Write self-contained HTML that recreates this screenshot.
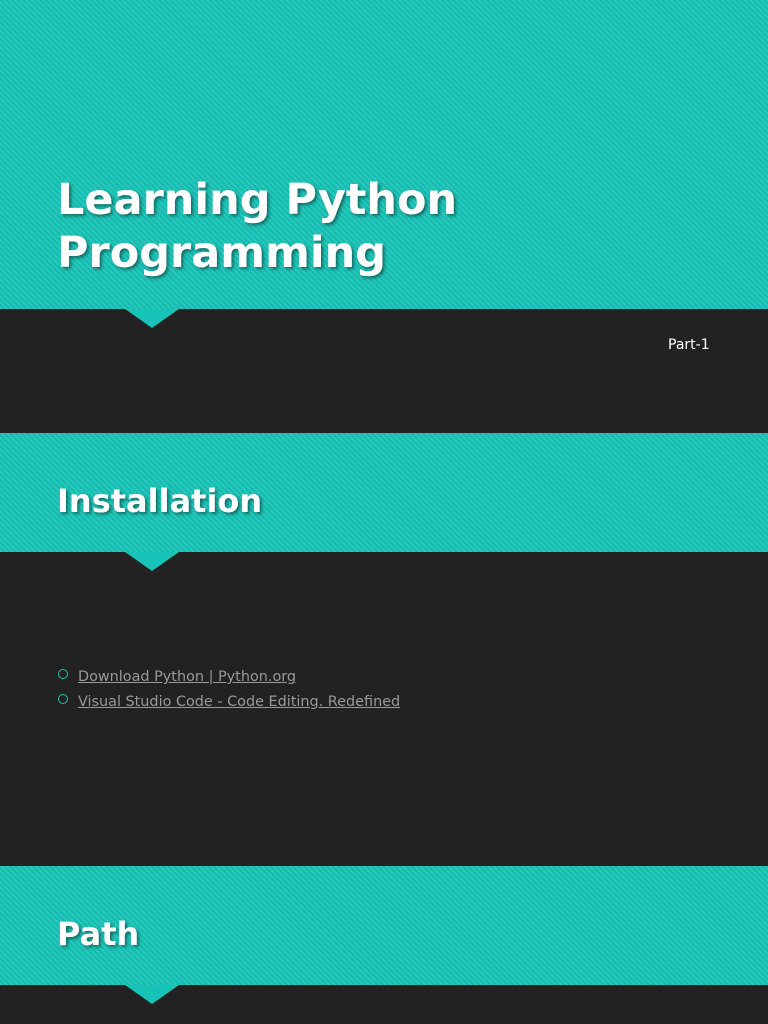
<!DOCTYPE html>
<html><head><style>
body{margin:0;width:768px;height:1024px;overflow:hidden;background:#222;font-family:"DejaVu Sans","Liberation Sans",sans-serif;}
.t{position:absolute;left:0;width:768px;background-color:#17c3b6;background-image:repeating-linear-gradient(45deg,rgba(255,255,255,0.07) 0 2px,rgba(0,0,0,0.04) 2px 4px);}
.tri{position:absolute;left:125px;width:0;height:0;border-left:27px solid transparent;border-right:27px solid transparent;border-top:19px solid #17c3b6;}
h1,h2{position:absolute;left:57px;margin:0;color:#fff;font-weight:bold;text-shadow:2px 2px 3px rgba(0,0,0,0.45);}
h1{font-size:43px;line-height:53px;top:174px;}
h2{font-size:32px;}
a{color:#999;font-size:14.4px;text-decoration:underline;}
.li{position:absolute;left:58px;}
.li span{display:inline-block;width:8px;height:8px;border:1.5px solid #17c3b6;border-radius:50%;margin-right:10px;vertical-align:2px;}
</style></head><body>
<div class="t" style="top:0;height:309px"></div>
<div class="tri" style="top:309px"></div>
<h1>Learning Python<br>Programming</h1>
<div style="position:absolute;left:668px;top:337px;color:#fff;font-size:14px">Part-1</div>
<div class="t" style="top:433px;height:119px"></div>
<div class="tri" style="top:552px"></div>
<h2 style="top:482px">Installation</h2>
<div class="li" style="top:666px"><span></span><a>Download Python | Python.org</a></div>
<div class="li" style="top:691px"><span></span><a>Visual Studio Code - Code Editing. Redefined</a></div>
<div class="t" style="top:866px;height:119px"></div>
<div class="tri" style="top:985px"></div>
<h2 style="top:915px">Path</h2>
</body></html>
